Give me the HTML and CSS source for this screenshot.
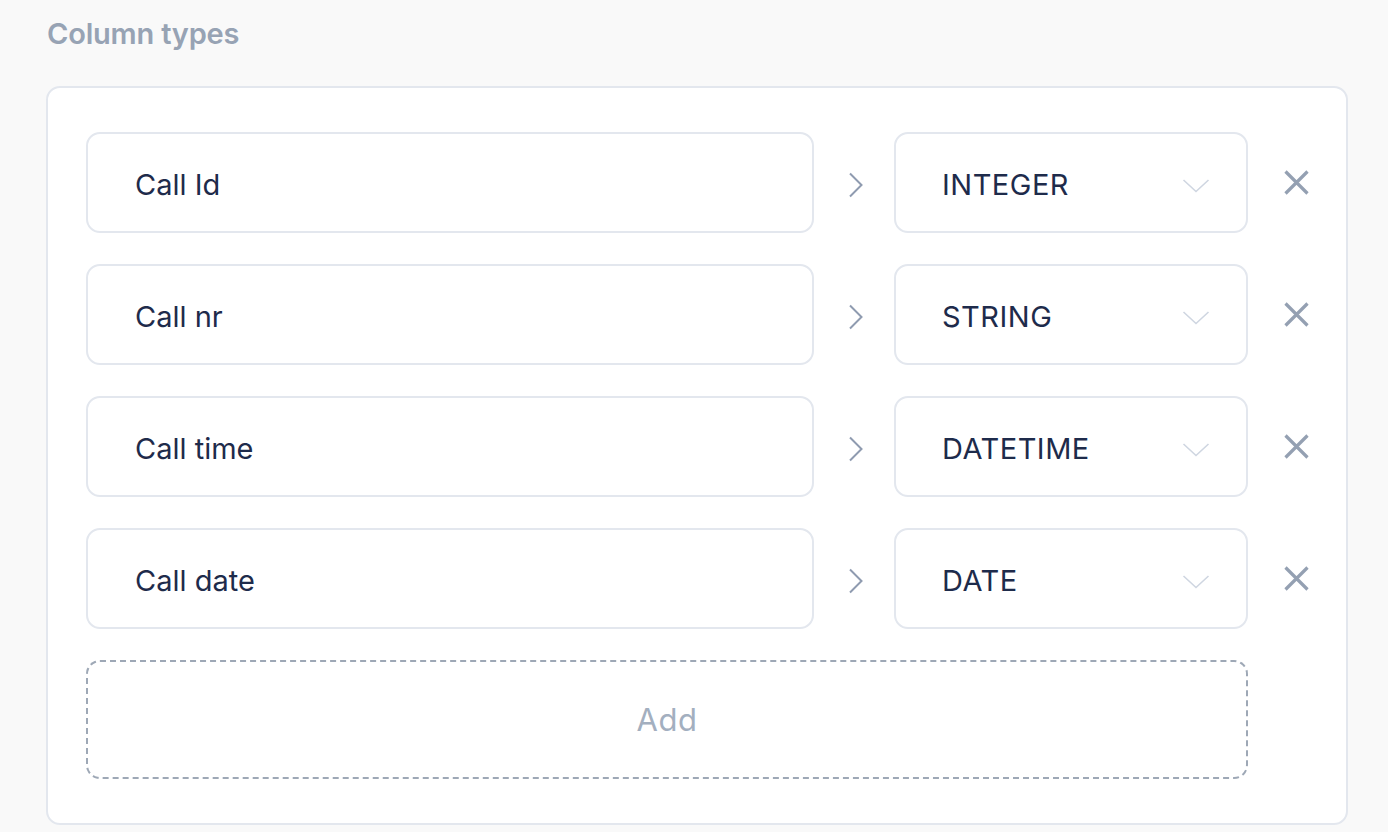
FILE: index.html
```html
<!DOCTYPE html>
<html lang="en">
<head>
<meta charset="utf-8">
<title>Column types</title>
<link rel="stylesheet" href="styles.css">
</head>
<body>
<section class="section">
  <h2 class="section-title">Column types</h2>
  <div class="card">
    <div class="rows">
      <div class="row">
        <div class="field">Call Id</div>
        <div class="arrow"><svg width="16" height="26" viewBox="0 0 16 26"><path d="M2 1.5 L13.5 13 L2 24.5" fill="none" stroke="#8f9bb0" stroke-width="2"/></svg></div>
        <div class="select"><span>INTEGER</span><svg class="caret" width="28" height="16" viewBox="0 0 28 16"><path d="M1.5 2 L14 13.5 L26.5 2" fill="none" stroke="#cfd6e1" stroke-width="1.6"/></svg></div>
        <button class="remove" aria-label="Remove"><svg width="25" height="25" viewBox="0 0 25 25"><path d="M1.5 1.5 L23.5 23.5 M23.5 1.5 L1.5 23.5" stroke="#94a0b2" stroke-width="3.2"/></svg></button>
      </div>
      <div class="row">
        <div class="field">Call nr</div>
        <div class="arrow"><svg width="16" height="26" viewBox="0 0 16 26"><path d="M2 1.5 L13.5 13 L2 24.5" fill="none" stroke="#8f9bb0" stroke-width="2"/></svg></div>
        <div class="select"><span>STRING</span><svg class="caret" width="28" height="16" viewBox="0 0 28 16"><path d="M1.5 2 L14 13.5 L26.5 2" fill="none" stroke="#cfd6e1" stroke-width="1.6"/></svg></div>
        <button class="remove" aria-label="Remove"><svg width="25" height="25" viewBox="0 0 25 25"><path d="M1.5 1.5 L23.5 23.5 M23.5 1.5 L1.5 23.5" stroke="#94a0b2" stroke-width="3.2"/></svg></button>
      </div>
      <div class="row">
        <div class="field">Call time</div>
        <div class="arrow"><svg width="16" height="26" viewBox="0 0 16 26"><path d="M2 1.5 L13.5 13 L2 24.5" fill="none" stroke="#8f9bb0" stroke-width="2"/></svg></div>
        <div class="select"><span>DATETIME</span><svg class="caret" width="28" height="16" viewBox="0 0 28 16"><path d="M1.5 2 L14 13.5 L26.5 2" fill="none" stroke="#cfd6e1" stroke-width="1.6"/></svg></div>
        <button class="remove" aria-label="Remove"><svg width="25" height="25" viewBox="0 0 25 25"><path d="M1.5 1.5 L23.5 23.5 M23.5 1.5 L1.5 23.5" stroke="#94a0b2" stroke-width="3.2"/></svg></button>
      </div>
      <div class="row">
        <div class="field">Call date</div>
        <div class="arrow"><svg width="16" height="26" viewBox="0 0 16 26"><path d="M2 1.5 L13.5 13 L2 24.5" fill="none" stroke="#8f9bb0" stroke-width="2"/></svg></div>
        <div class="select"><span>DATE</span><svg class="caret" width="28" height="16" viewBox="0 0 28 16"><path d="M1.5 2 L14 13.5 L26.5 2" fill="none" stroke="#cfd6e1" stroke-width="1.6"/></svg></div>
        <button class="remove" aria-label="Remove"><svg width="25" height="25" viewBox="0 0 25 25"><path d="M1.5 1.5 L23.5 23.5 M23.5 1.5 L1.5 23.5" stroke="#94a0b2" stroke-width="3.2"/></svg></button>
      </div>
      <button class="add">Add</button>
    </div>
  </div>
</section>
</body>
</html>
```
FILE: styles.css
```css
* { box-sizing: border-box; }
html, body {
  margin: 0;
  background: #f9f9f9;
  font-family: Inter, "Noto Sans", sans-serif;
}
.section {
  padding: 16px 40px 0 46px;
}
.section-title {
  margin: 0 0 34px 1px;
  font-size: 29px;
  line-height: 36px;
  font-weight: 600;
  color: #97a3b4;
  letter-spacing: -0.2px;
}
.card {
  width: 1302px;
  background: #fff;
  border: 2px solid #e3e7ee;
  border-radius: 14px;
  padding: 44px 38px 44px 38px;
}
.rows {
  display: flex;
  flex-direction: column;
  gap: 31px;
}
.row {
  display: flex;
  align-items: center;
  height: 101px;
}
.field, .select {
  height: 101px;
  border: 2px solid #e3e7ee;
  border-radius: 14px;
  display: flex;
  align-items: center;
  color: #1e2b4b;
}
.field {
  width: 728px;
  padding: 4px 0 0 47px;
  font-size: 29px;
}
.arrow {
  width: 80px;
  display: flex;
  justify-content: center;
  padding: 4px 0 0 4px;
}
.arrow svg { display: block; }
.select {
  width: 354px;
  padding: 4px 36px 0 46px;
  justify-content: space-between;
  font-size: 29px;
  letter-spacing: 0.5px;
}
.caret { display: block; margin-top: 2px; }
.remove {
  flex: 1;
  display: flex;
  justify-content: flex-end;
  padding: 0 0 0 0;
  margin-right: -1px;
  border: 0;
  background: none;
}
.remove svg { display: block; }
.add {
  width: 1162px;
  height: 119px;
  border: 2px dashed #9ea8b6;
  border-radius: 14px;
  background: #fff;
  font-family: Inter, "Noto Sans", sans-serif;
  font-size: 31px;
  letter-spacing: 0.6px;
  color: #a3afbf;
  padding: 0;
}
```
